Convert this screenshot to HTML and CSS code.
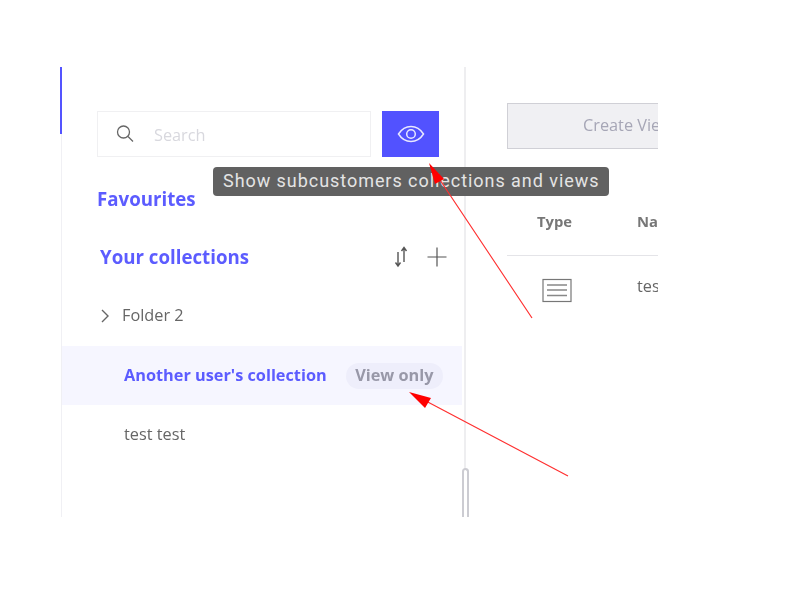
FILE: index.html
```html
<!DOCTYPE html>
<html>
<head>
  <title>Collections</title>
  <link rel="stylesheet" href="styles.css">
</head>
<body>
  <div class="frame">
    <div class="sidebar">
      <div class="search-row">
        <div class="search">
          <svg class="search-icon" width="20" height="20" viewBox="0 0 20 20"><circle cx="8.500" cy="8" r="6" fill="none" stroke="#666" stroke-width="1.300"/><path d="M13 12.500l5 5" stroke="#666" stroke-width="1.300" fill="none"/></svg>
          <span class="placeholder">Search</span>
        </div>
        <div class="eye-btn">
          <svg width="28" height="20" viewBox="0 0 28 20"><path d="M1.500 10C5 4.500 9 2.500 14 2.500S23 4.500 26.500 10C23 15.500 19 17.500 14 17.500S5 15.500 1.500 10Z" fill="none" stroke="#e8e8ff" stroke-width="1.500"/><circle cx="14" cy="10" r="4.300" fill="none" stroke="#e8e8ff" stroke-width="1.500"/></svg>
        </div>
      </div>
      <h2 class="favourites">Favourites</h2>
      <div class="collections-head">
        <h2>Your collections</h2>
        <div class="head-icons">
          <svg width="14" height="22" viewBox="0 0 14 22"><path d="M4 6v14M1.500 16.500L4 20l2.500-3.500M10 16V2M7.500 5L10 1.500 12.500 5" fill="none" stroke="#555" stroke-width="1.400"/></svg>
          <svg width="20" height="20" viewBox="0 0 20 20"><path d="M10 0.500v19M0.500 10h19" fill="none" stroke="#555" stroke-width="1.200"/></svg>
        </div>
      </div>
      <div class="row folder">
        <svg width="8" height="14" viewBox="0 0 8 14"><path d="M1 1l6 6-6 6" fill="none" stroke="#666" stroke-width="1.400"/></svg>
        <span>Folder 2</span>
      </div>
      <div class="row active">
        <span>Another user's collection</span>
        <span class="badge">View only</span>
      </div>
      <div class="row">
        <span>test test</span>
      </div>
    </div>
    <div class="main">
      <div class="create-btn">Create View</div>
      <div class="table-head">
        <span class="col-type">Type</span>
        <span>Name</span>
      </div>
      <div class="table-row">
        <span class="col-icon">
          <svg width="30" height="25" viewBox="0 0 30 25"><rect x="1" y="1.500" width="28" height="22" fill="none" stroke="#777" stroke-width="1.200"/><path d="M5 7h20M5 12h20M5 17.500h20" stroke="#888" stroke-width="1.300"/></svg>
        </span>
        <span class="cell">test</span>
      </div>
    </div>
    <div class="scrollbar"></div>
  </div>

  <div class="tooltip">Show subcustomers collections and views</div>

  <svg class="arrows" width="800" height="600" viewBox="0 0 800 600">
    <path d="M532 318L438 177M568 476L424 400" fill="none" stroke="#ff3030" stroke-width="1.200"/>
    <path d="M429 163L444 179 435 184Z" fill="#ff0000"/>
    <path d="M409 392L431 398 425 408Z" fill="#ff0000"/>
  </svg>
</body>
</html>
```

FILE: styles.css
```css
body {
  margin: 0;
  background: #fff;
  font-family: "Open Sans", sans-serif;
  color: #666;
  filter: blur(0.350px);
}

.frame {
  position: relative;
  display: flex;
  width: 596px;
  height: 450px;
  margin: 67px 0 0 61px;
  border-left: 1px solid #f0f0f4;
}

/* active tab marker on the left edge */
.frame::before {
  content: "";
  position: absolute;
  top: 0;
  left: -2px;
  width: 1.500px;
  height: 67px;
  background: #5454ff;
}

.sidebar {
  width: 404px;
  flex-shrink: 0;
  box-sizing: border-box;
  padding-top: 44px;
  border-right: 2px solid #eeeef0;
}

.search-row {
  display: flex;
  gap: 11px;
  margin-left: 35px;
}

.search {
  display: flex;
  align-items: center;
  width: 274px;
  height: 46px;
  box-sizing: border-box;
  padding-left: 17px;
  border: 1px solid #f0f0f2;
}

.placeholder {
  margin-left: 19px;
  padding-top: 2px;
  font-size: 16.300px;
  color: #d8d8de;
}

.eye-btn {
  display: flex;
  align-items: center;
  justify-content: center;
  width: 57px;
  height: 46px;
  background: #5252ff;
}

h2 {
  margin: 0;
  font-size: 18.700px;
  font-weight: 700;
  color: #5c5cff;
}

.favourites {
  margin: 29px 0 0 35px;
  line-height: 26px;
}

.collections-head {
  display: flex;
  align-items: center;
  justify-content: space-between;
  height: 26px;
  margin: 32px 17px 0 38px;
}

.collections-head h2 {
  padding-bottom: 2px;
}

.head-icons {
  display: flex;
  align-items: center;
  gap: 19px;
}

.row {
  display: flex;
  align-items: center;
  justify-content: space-between;
  height: 59px;
  padding: 0 19px 0 62px;
  font-size: 16.300px;
  margin-right: 2px;
}

.row span {
  padding-bottom: 2px;
}

.folder {
  justify-content: flex-start;
  gap: 13px;
  height: 60px;
  margin-top: 16px;
  padding-left: 39px;
}

.active {
  background: #f6f6ff;
  font-weight: 700;
  color: #5c5cff;
}

.row .badge {
  padding: 1px 9.500px 3px;
  border-radius: 13px;
  background: #eeeefb;
  color: #9898a8;
  line-height: 22px;
}

.main {
  flex: 1;
  min-width: 0;
  overflow: hidden;
  padding: 36px 0 0 41px;
}

.create-btn {
  width: 200px;
  height: 46px;
  box-sizing: border-box;
  padding-left: 75px;
  border: 1px solid #d0d0d6;
  background: #f0f0f3;
  color: #a6a6b6;
  font-size: 16.300px;
  line-height: 42px;
  white-space: nowrap;
}

.table-head,
.table-row {
  display: flex;
  width: 200px;
  white-space: nowrap;
}

.table-head {
  height: 44px;
  margin-top: 45px;
  padding-top: 17px;
  border-bottom: 1px solid #e4e4e8;
  font-size: 14.800px;
  font-weight: 700;
  color: #777;
}

.table-row {
  padding-top: 22px;
  font-size: 16.300px;
}

.col-type,
.col-icon {
  width: 130px;
  flex-shrink: 0;
  box-sizing: border-box;
}

.col-type {
  padding-left: 30px;
}

.col-icon {
  padding-left: 35px;
}

.cell {
  margin-top: -3px;
}

.scrollbar {
  position: absolute;
  left: 400px;
  top: 401px;
  width: 7px;
  height: 49px;
  box-sizing: border-box;
  border: 2px solid #ccccd2;
  border-bottom: 0;
  border-radius: 4px 4px 0 0;
  background: #fff;
}

.tooltip {
  position: absolute;
  left: 213px;
  top: 167px;
  width: 396px;
  height: 29px;
  box-sizing: border-box;
  padding-left: 10px;
  border-radius: 4px;
  background: #616161;
  color: #e4e4e4;
  font-family: Roboto, sans-serif;
  font-size: 18px;
  letter-spacing: 0.950px;
  line-height: 28px;
  white-space: nowrap;
}

.arrows {
  position: absolute;
  left: 0;
  top: 0;
}
```
